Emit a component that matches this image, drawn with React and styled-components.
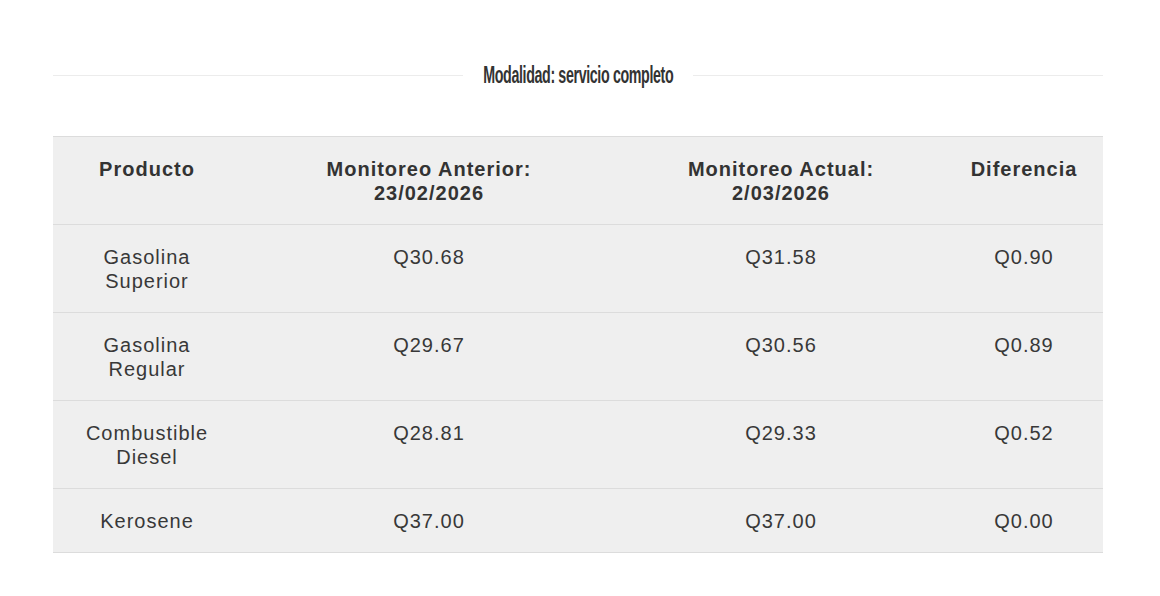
import React from "react";
import styled, { createGlobalStyle } from "styled-components";

const GlobalStyle = createGlobalStyle`
  body {
    margin: 0;
    background: #fff;
    font-family: "Liberation Sans", Arial, sans-serif;
    color: #333;
  }
`;

const rows = [
  { product: "Gasolina Superior", prev: "Q30.68", curr: "Q31.58", diff: "Q0.90" },
  { product: "Gasolina Regular", prev: "Q29.67", curr: "Q30.56", diff: "Q0.89" },
  { product: "Combustible Diesel", prev: "Q28.81", curr: "Q29.33", diff: "Q0.52" },
  { product: "Kerosene", prev: "Q37.00", curr: "Q37.00", diff: "Q0.00" },
];

const App = () => {
  return (
    <>
      <GlobalStyle />
      <Wrapper>
        <Heading>
          <Line />
          <TitleBox>
            <Title>Modalidad: servicio completo</Title>
          </TitleBox>
          <Line />
        </Heading>
        <Table>
          <colgroup>
            <col style={{ width: 188 }} />
            <col style={{ width: 376 }} />
            <col style={{ width: 328 }} />
            <col style={{ width: 158 }} />
          </colgroup>
          <thead>
            <tr>
              <Th>Producto</Th>
              <Th>
                Monitoreo Anterior:
                <br />
                23/02/2026
              </Th>
              <Th>
                Monitoreo Actual:
                <br />
                2/03/2026
              </Th>
              <Th>Diferencia</Th>
            </tr>
          </thead>
          <tbody>
            {rows.map((r) => (
              <tr key={r.product}>
                <Td>{r.product}</Td>
                <Td>{r.prev}</Td>
                <Td>{r.curr}</Td>
                <Td>{r.diff}</Td>
              </tr>
            ))}
          </tbody>
        </Table>
      </Wrapper>
    </>
  );
};
export default App;

const Wrapper = styled.div`
  width: 1050px;
  padding: 62px 0 40px 53px;
`;

const Heading = styled.div`
  display: flex;
  align-items: center;
  gap: 18px;
  height: 26px;
  margin-bottom: 48px;
`;

const Line = styled.div`
  flex: 1;
  height: 1px;
  background: #ececec;
`;

const TitleBox = styled.div`
  width: 194px;
  display: flex;
  justify-content: center;
  overflow: visible;
`;

const Title = styled.span`
  display: inline-block;
  white-space: nowrap;
  font-family: "Liberation Sans", Arial, sans-serif;
  font-weight: 700;
  font-size: 23px;
  letter-spacing: -0.6px;
  color: #333;
  transform: scaleX(0.62);
  transform-origin: center;
`;

const Table = styled.table`
  width: 1050px;
  border-collapse: collapse;
  table-layout: fixed;
  background: #efefef;
  border-top: 1px solid #dcdcdc;
  border-bottom: 1px solid #dcdcdc;
`;

const Th = styled.th`
  padding: 20px 15px 19px;
  font-size: 20px;
  line-height: 24px;
  font-weight: 700;
  letter-spacing: 1px;
  color: #333;
  text-align: center;
  vertical-align: top;
  border-bottom: 1px solid #dcdcdc;
`;

const Td = styled.td`
  padding: 20px 15px 19px;
  font-size: 20px;
  line-height: 24px;
  letter-spacing: 1px;
  color: #383838;
  text-align: center;
  vertical-align: top;
  border-bottom: 1px solid #dcdcdc;
`;
